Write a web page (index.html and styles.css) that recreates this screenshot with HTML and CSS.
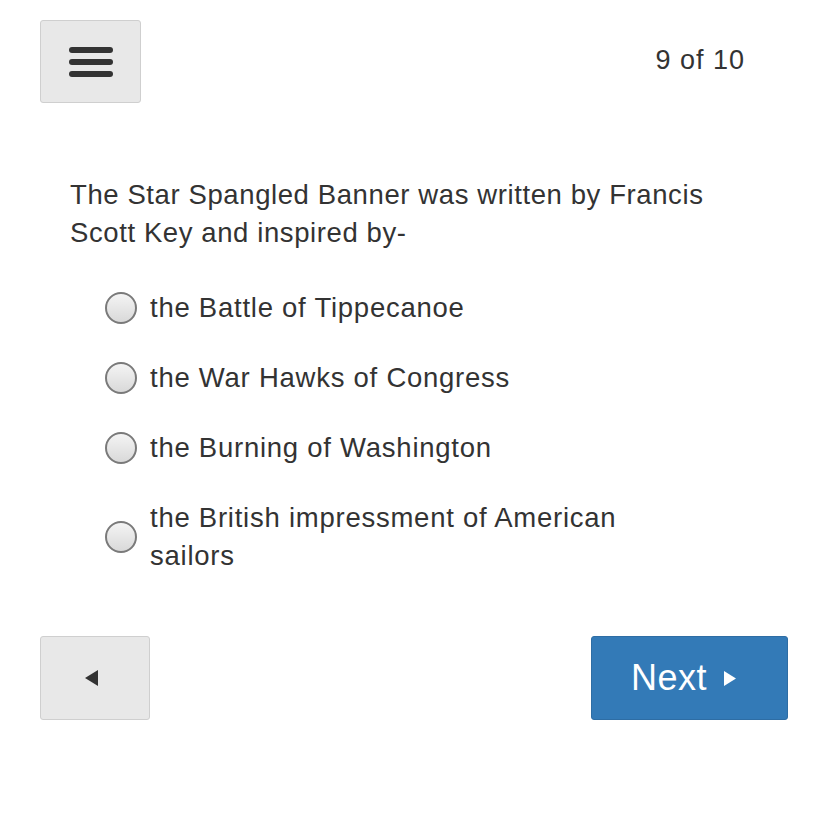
FILE: index.html
```html
<!DOCTYPE html>
<html lang="en">
<head>
    <meta charset="UTF-8">
    <meta name="viewport" content="width=device-width, initial-scale=1.0">
    <title>Quiz</title>
    <link rel="stylesheet" href="styles.css">
</head>
<body>
    <header>
        <button class="btn menu-btn" aria-label="Menu">
            <svg width="44" height="34" viewBox="0 0 44 34">
                <line x1="3" y1="5" x2="41" y2="5" />
                <line x1="3" y1="17" x2="41" y2="17" />
                <line x1="3" y1="29" x2="41" y2="29" />
            </svg>
        </button>
        <span class="counter">9 of 10</span>
    </header>

    <main>
        <p class="question">The Star Spangled Banner was written by Francis Scott Key and inspired by-</p>

        <div class="options">
            <label class="option"><span class="radio"></span><span class="label">the Battle of Tippecanoe</span></label>
            <label class="option"><span class="radio"></span><span class="label">the War Hawks of Congress</span></label>
            <label class="option"><span class="radio"></span><span class="label">the Burning of Washington</span></label>
            <label class="option"><span class="radio"></span><span class="label">the British impressment of American sailors</span></label>
        </div>
    </main>

    <footer>
        <button class="btn prev-btn" aria-label="Previous">
            <svg width="13" height="16" viewBox="0 0 13 16"><polygon points="0,8 13,0 13,16" /></svg>
        </button>
        <button class="btn next-btn">Next
            <svg class="arrow" width="12" height="15" viewBox="0 0 12 15"><polygon points="0,0 12,7.5 0,15" /></svg>
        </button>
    </footer>
</body>
</html>
```

FILE: styles.css
```css
* {
    margin: 0;
    padding: 0;
    box-sizing: border-box;
}

body {
    font-family: "Liberation Sans", Arial, sans-serif;
    color: #333333;
    background: #ffffff;
    width: 828px;
}

header {
    display: flex;
    justify-content: space-between;
    align-items: center;
    padding: 20px 84px 0 40px;
}

.btn {
    font-family: inherit;
    border-radius: 3px;
    cursor: pointer;
    display: flex;
    align-items: center;
    justify-content: center;
}

.menu-btn {
    width: 101px;
    height: 83px;
    background: #e8e8e8;
    border: 1px solid #cfcfcf;
}

.menu-btn svg line {
    stroke: #333333;
    stroke-width: 6;
    stroke-linecap: round;
}

.counter {
    font-size: 27px;
    letter-spacing: 1px;
    margin-top: -2px;
    margin-right: -1px;
}

main {
    padding: 73px 0 0 70px;
}

.question {
    font-size: 27.5px;
    letter-spacing: 0.6px;
    line-height: 38px;
    width: 660px;
}

.options {
    display: flex;
    flex-direction: column;
    gap: 32px;
    padding: 37px 0 0 35px;
}

.option {
    display: flex;
    align-items: center;
    gap: 13px;
    font-size: 27.5px;
    letter-spacing: 0.75px;
    line-height: 38px;
}

.radio {
    flex: none;
    width: 32px;
    height: 32px;
    border-radius: 50%;
    border: 2px solid #7a7a7a;
    background: linear-gradient(#f4f4f4, #d9d9d9);
}

.label {
    max-width: 490px;
}

footer {
    display: flex;
    justify-content: space-between;
    padding: 61px 40px 0 40px;
}

.prev-btn {
    width: 110px;
    height: 84px;
    background: #e8e8e8;
    border: 1px solid #cfcfcf;
    padding-right: 8px;
}

.prev-btn svg polygon {
    fill: #333333;
}

.next-btn {
    width: 197px;
    height: 84px;
    background: #337ab7;
    border: 1px solid #2e6da4;
    color: #ffffff;
    font-size: 36px;
    letter-spacing: 0.5px;
    gap: 17px;
    padding-right: 12px;
}

.next-btn .arrow polygon {
    fill: #ffffff;
}
```
